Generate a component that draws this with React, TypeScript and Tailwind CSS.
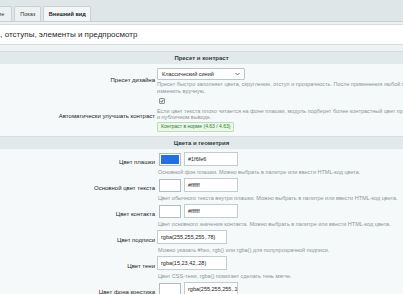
import React from "react";

const colorRows = [
  { label: "Цвет плашки", swatch: "#1f6fe6", value: "#1f6fe6", desc: "Основной фон плашки. Можно выбрать в палитре или ввести HTML-код цвета." },
  { label: "Основной цвет текста", swatch: "#ffffff", value: "#ffffff", desc: "Цвет обычного текста внутри плашки. Можно выбрать в палитре или ввести HTML-код цвета." },
  { label: "Цвет контакта", swatch: "#ffffff", value: "#ffffff", desc: "Цвет основного значения контакта. Можно выбрать в палитре или ввести HTML-код цвета." },
  { label: "Цвет подписи", value: "rgba(255,255,255,.78)", desc: "Можно указать #hex, rgb() или rgba() для полупрозрачной подписи." },
  { label: "Цвет тени", value: "rgba(15,23,42,.28)", desc: "Цвет CSS-тени, rgba() помогает сделать тень мягче." },
  { label: "Цвет фона крестика", swatch: "#ffffff", value: "rgba(255,255,255,.18)", desc: "Фон кнопки закрытия." },
];

function SectionHeader({ children }: { children: React.ReactNode }) {
  return (
    <div className="h-[13px] bg-[#e2e9eb] border-t border-[#d5dde0] flex items-center justify-center text-[6px] font-bold text-[#2f3a3d]">
      {children}
    </div>
  );
}

function Label({ children }: { children: React.ReactNode }) {
  return <div className="flex items-center justify-end text-[6px] text-[#1e2426] whitespace-nowrap">{children}</div>;
}

function Desc({ children }: { children: React.ReactNode }) {
  return <div className="text-[5.5px] leading-[6px] text-[#8b9598] whitespace-nowrap">{children}</div>;
}

export default function App() {
  return (
    <div className="w-[403px] h-[294px] overflow-hidden bg-[#f6f9f9] font-['Liberation_Sans',Arial,sans-serif]">
      {/* Tabs */}
      <div className="h-[22px] bg-[#dfe6e8] border-b border-[#c6cfd2] flex items-end gap-[2px]">
        <div className="-ml-[32px] h-[15px] px-[7px] flex items-center bg-[#edf1f2] border border-b-0 border-[#c9d2d5] rounded-t-[2px] text-[5.5px] text-[#333]">
          Поведение
        </div>
        <div className="h-[15px] w-[27px] flex items-center justify-center bg-[#edf1f2] border border-b-0 border-[#c9d2d5] rounded-t-[2px] text-[5.5px] text-[#333]">
          Показ
        </div>
        <div className="h-[15px] w-[48px] flex items-center justify-center bg-[#f3f6f7] border border-b-0 border-[#c9d2d5] rounded-t-[2px] text-[5.5px] font-bold text-[#222]">
          Внешний вид
        </div>
      </div>
      <div className="h-[2px] bg-[#eef2f3]" />

      {/* Title */}
      <div className="h-[21px] bg-white border-y border-[#d7dee0] flex items-center whitespace-nowrap">
        <span className="-ml-[22px] text-[8px] text-[#2a2a2a]">Цвета, отступы, элементы и предпросмотр</span>
      </div>
      <div className="h-[6px] bg-[#eef2f3]" />

      <SectionHeader>Пресет и контраст</SectionHeader>

      <div className="grid grid-cols-[155px_1fr] gap-x-[2px]">
        <Label>Пресет дизайна</Label>
        <div className="pt-[4px] pb-[2px]">
          <div className="h-[12px] w-[88px] bg-white border border-[#bcc6c9] rounded-[1px] flex items-center justify-between px-[4px] text-[5.5px] text-[#222]">
            <span>Классический синий</span>
            <svg width="5" height="4" viewBox="0 0 10 6" fill="none" stroke="#444" strokeWidth="1.6">
              <path d="M1 1l4 4 4-4" />
            </svg>
          </div>
          <div className="mt-[1px] text-[5.5px] leading-[6.5px] text-[#8b9598] whitespace-nowrap">
            Пресет быстро заполняет цвета, скругление, отступ и прозрачность. После применения любой параметр можно
            <br />
            изменить вручную.
          </div>
        </div>

        <Label>Автоматически улучшать контраст</Label>
        <div className="pt-[2px] pb-[4px]">
          <div className="ml-[2px] w-[6px] h-[6px] border border-[#8d979a] bg-[#e8ecee] rounded-[1px] flex items-center justify-center">
            <svg width="4" height="4" viewBox="0 0 10 10" fill="none" stroke="#333" strokeWidth="1.8">
              <path d="M1.5 5.5l2.5 2.5 4.5-6" />
            </svg>
          </div>
          <div className="mt-[4px]">
            <Desc>
              Если цвет текста плохо читается на фоне плашки, модуль подберет более контрастный цвет при предпросмотре
              <br />
              и публичном выводе.
            </Desc>
          </div>
          <div className="mt-[2px] h-[10px] w-fit px-[3px] flex items-center bg-[#eaf7e9] border border-[#b9e0b6] rounded-[1px] text-[5px] text-[#2e7d32]">
            Контраст в норме (4.63 / 4.63)
          </div>
        </div>
      </div>

      <SectionHeader>Цвета и геометрия</SectionHeader>

      <div className="grid grid-cols-[155px_1fr] gap-x-[2px]">
        {colorRows.map((r) => (
          <React.Fragment key={r.label}>
            <Label>{r.label}</Label>
            <div className="h-[26px] pt-[3px]">
              <div className="flex items-center h-[14px]">
                {r.swatch ? (
                  <>
                    <div className="ml-[2px] w-[22px] h-[13px] border border-[#b3bdc0] bg-white p-[1px]">
                      <div className="w-full h-full" style={{ backgroundColor: r.swatch }} />
                    </div>
                    <div className="ml-[3px] h-[14px] w-[54px] bg-white border border-[#c3cccf] flex items-center px-[3px] overflow-hidden whitespace-nowrap text-[5.5px] text-[#222]">
                      {r.value}
                    </div>
                  </>
                ) : (
                  <div className="h-[14px] w-[70px] bg-white border border-[#c3cccf] flex items-center px-[3px] overflow-hidden whitespace-nowrap text-[5.5px] text-[#222]">
                    {r.value}
                  </div>
                )}
              </div>
              <div className="mt-[3px] pl-[1px]">
                <Desc>{r.desc}</Desc>
              </div>
            </div>
          </React.Fragment>
        ))}
      </div>
    </div>
  );
}
